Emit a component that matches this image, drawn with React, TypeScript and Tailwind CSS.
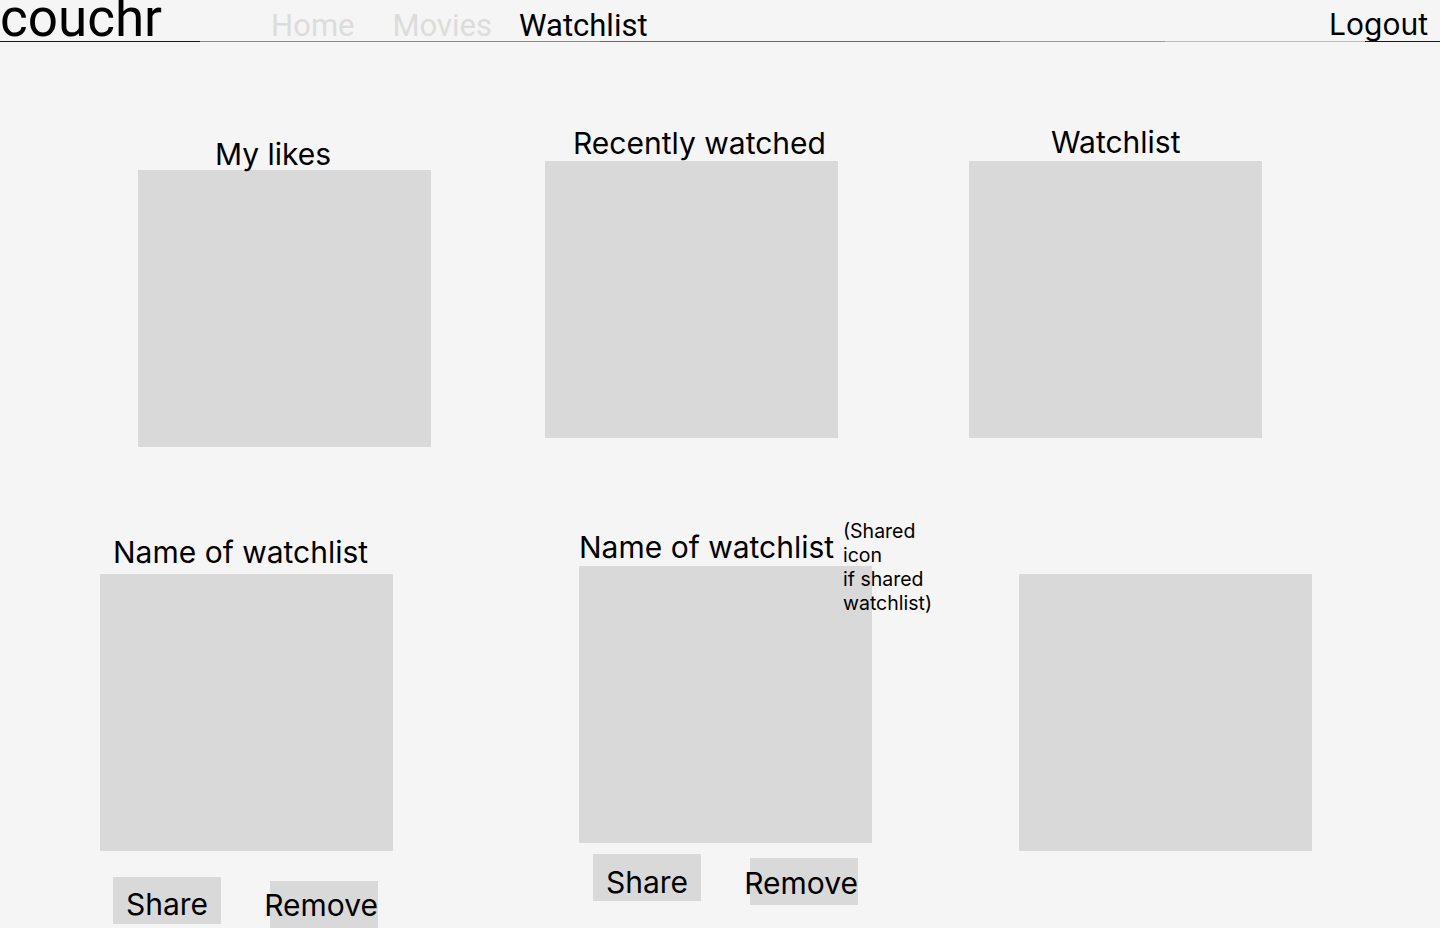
import React from "react";

const inter = { fontFamily: "Inter, 'Noto Sans', sans-serif" };
const roboto = { fontFamily: "Roboto, 'Liberation Sans', sans-serif" };

function Box() {
  return <div className="w-[293px] h-[277px] bg-[#d9d9d9]" />;
}

function Btn({ label, end, pt }: { label: string; end?: boolean; pt: string }) {
  return (
    <div
      className={
        "w-[108px] h-[47px] bg-[#d9d9d9] flex items-start text-[30px] leading-[34px] text-black whitespace-nowrap " +
        pt +
        " " +
        (end ? "justify-end" : "justify-center")
      }
    >
      <span>{label}</span>
    </div>
  );
}

export default function App() {
  return (
    <div className="w-[1440px] h-[928px] bg-[#f5f5f5] overflow-hidden text-black" style={inter}>
      {/* Header */}
      <div className="relative h-[42px] flex items-start">
        <div className="text-[53px] leading-[40px] h-[41px] overflow-hidden text-black" style={roboto}>
          <span className="relative top-[-2px]">couchr</span>
        </div>
        <div className="flex items-start pt-[8px] text-[31px] leading-[36px]" style={roboto}>
          <span className="ml-[109px] text-[#dcdcdc]">Home</span>
          <span className="ml-[38px] text-[#dcdcdc]">Movies</span>
          <span className="ml-[27px] text-black">Watchlist</span>
        </div>
        <div className="ml-auto pr-[12px] pt-[6px] text-[30px] leading-[36px]">Logout</div>
        <div className="absolute left-0 right-0 top-[41px] h-[1px] flex">
          <div className="w-[200px] bg-[#1a1a1a]" />
          <div className="w-[400px] bg-[#8a8a8a]" />
          <div className="w-[400px] bg-[#6a6a6a]" />
          <div className="w-[165px] bg-[#9a9a9a]" />
          <div className="w-[200px] bg-[#bdbdbd]" />
          <div className="flex-1 bg-[#1a1a1a]" />
        </div>
      </div>

      {/* Row 1 */}
      <div className="flex items-start">
        <div className="ml-[138px] mt-[96px]">
          <div className="pl-[77px] text-[30px] leading-[32px] h-[32px] whitespace-nowrap">My likes</div>
          <Box />
        </div>
        <div className="ml-[114px] mt-[85px]">
          <div className="pl-[28px] text-[30px] leading-[32px] h-[32px] whitespace-nowrap">Recently watched</div>
          <div className="mt-[2px]">
            <Box />
          </div>
        </div>
        <div className="ml-[131px] mt-[84px]">
          <div className="pl-[82px] text-[30px] leading-[32px] h-[32px] whitespace-nowrap">Watchlist</div>
          <div className="mt-[3px]">
            <Box />
          </div>
        </div>
      </div>

      {/* Row 2 */}
      <div className="flex items-start">
        <div className="ml-[100px] mt-[89px]">
          <div className="pl-[13px] text-[30px] leading-[32px] h-[32px] whitespace-nowrap">Name of watchlist</div>
          <div className="mt-[6px]">
            <Box />
          </div>
          <div className="flex items-start mt-[26px] pl-[13px]">
            <Btn label="Share" pt="pt-[10px]" />
            <div className="ml-[49px] mt-[4px]">
              <Btn label="Remove" end pt="pt-[7px]" />
            </div>
          </div>
        </div>
        <div className="relative ml-[186px] mt-[84px]">
          <div className="text-[30px] leading-[32px] h-[32px] whitespace-nowrap">Name of watchlist</div>
          <div className="mt-[3px]">
            <Box />
          </div>
          <div className="flex items-start mt-[11px] pl-[14px]">
            <Btn label="Share" pt="pt-[11px]" />
            <div className="ml-[49px] mt-[4px]">
              <Btn label="Remove" end pt="pt-[8px]" />
            </div>
          </div>
          <div className="absolute left-[264px] top-[-12px] text-[19.5px] leading-[24px] whitespace-nowrap">
            (Shared
            <br />
            icon
            <br />
            if shared
            <br />
            watchlist)
          </div>
        </div>
        <div className="ml-[147px] mt-[127px]">
          <Box />
        </div>
      </div>
    </div>
  );
}
